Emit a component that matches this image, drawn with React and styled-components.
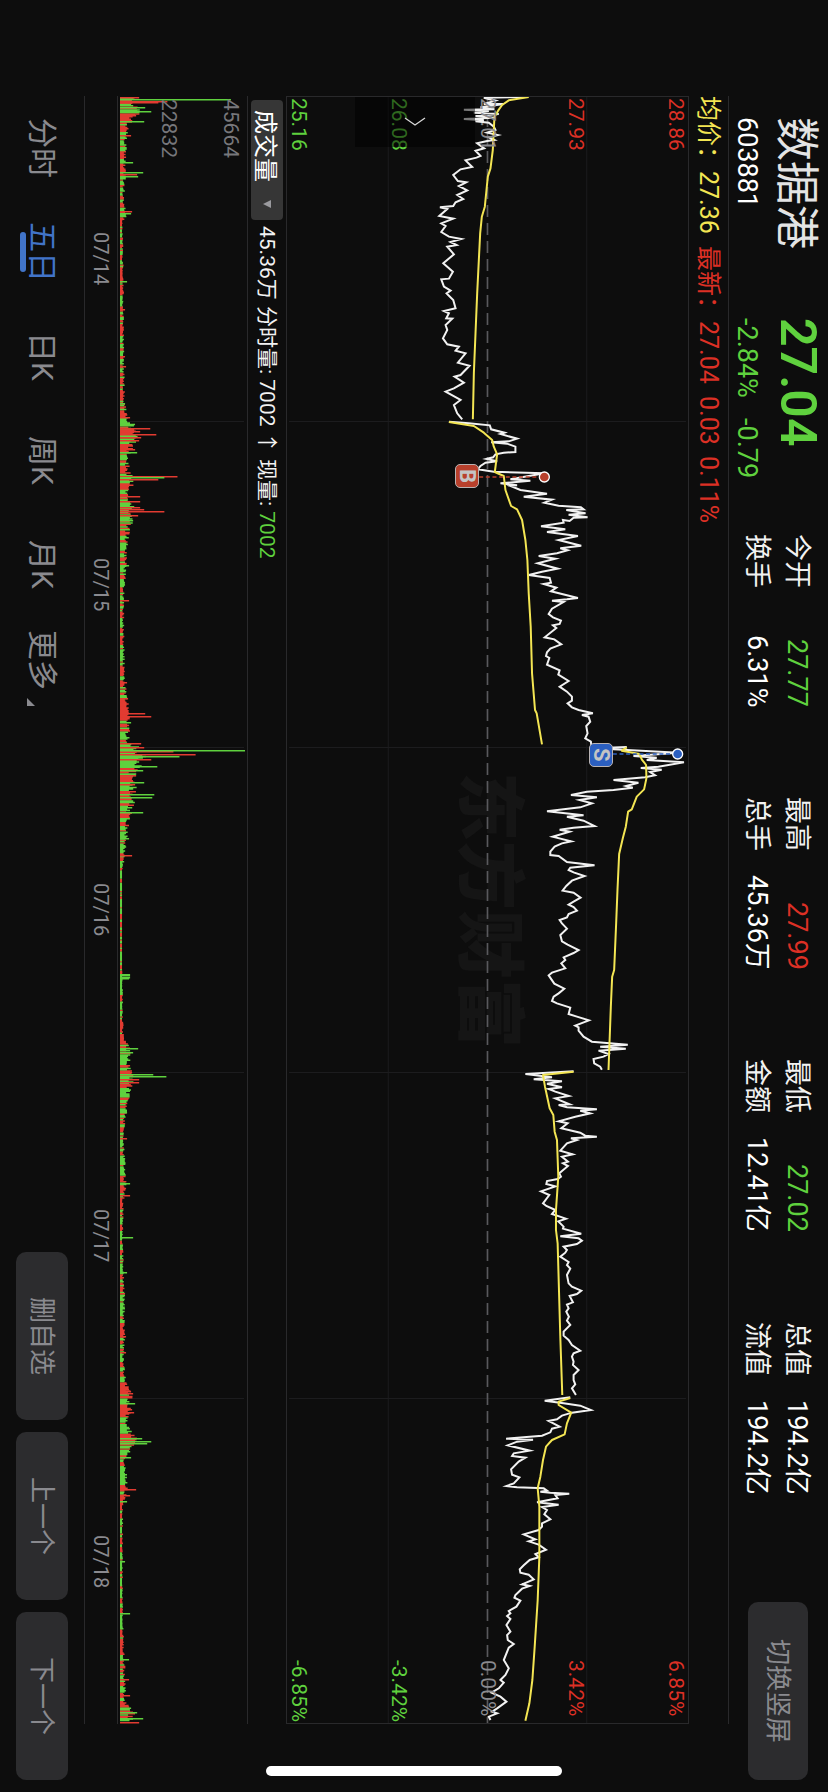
import React from "react";
import styled, { createGlobalStyle } from "styled-components";

const RED = "#dc3025";
const GREEN = "#5fd13e";
const YELLOW = "#f3e553";
const MUTED = "#8a8a8f";
const RULE = "#29292b";
const GRID = "#1c1c1e";

const GlobalStyle = createGlobalStyle`
  *, *::before, *::after { box-sizing: border-box; }
  body { margin: 0; background: #0d0d0d; }
  button, select { font: inherit; color: inherit; border: 0; margin: 0; padding: 0; }
`;

/* The phone is held sideways: every row runs from top to bottom of the window. */
const Screen = styled.div`
  writing-mode: vertical-rl;
  text-orientation: sideways;
  position: relative;
  display: flex;
  flex-direction: column;
  width: 100%;
  height: 100vh;
  min-height: 1500px;
  overflow: hidden;
  background: #0d0d0d;
  color: #f2f2f2;
  font-family: Roboto, "Noto Sans CJK SC", sans-serif;
  font-size: 21px;
  white-space: nowrap;
`;

const Header = styled.header`
  display: flex;
  flex: none;
  block-size: 99px;
  padding-inline: 117px 12px;
`;

const Quote = styled.div`
  flex: none;
  inline-size: ${(p) => p.$size}px;
  padding-block-start: 4px;
`;

const Name = styled.h1`
  margin: 0;
  margin-block-end: 4px;
  font-size: 44px;
  font-weight: 400;
  line-height: 56px;
  color: #e4e4e4;
`;

const Price = styled.div`
  margin-block-end: 8px;
  font-size: 50px;
  font-weight: 600;
  line-height: 52px;
  color: ${GREEN};
`;

const SubLine = styled.div`
  display: flex;
  gap: 20px;
  font-size: 27px;
  line-height: 34px;
  color: ${(p) => p.$color || "#ffffff"};
`;

const Stats = styled.div`
  display: flex;
  flex: 1;
  justify-content: space-between;
  padding-block-start: 11px;
`;

const StatGroup = styled.dl`
  margin: 0;
  inline-size: 173px;
`;

const Stat = styled.div`
  display: flex;
  justify-content: space-between;
  font-size: 27px;
  line-height: 40px;
`;

const StatLabel = styled.dt`
  margin: 0;
`;

const StatValue = styled.dd`
  margin: 0;
  color: ${(p) => p.$color || "#ffffff"};
`;

const ActionButton = styled.button`
  flex: none;
  writing-mode: vertical-rl;
  text-orientation: sideways;
  inline-size: ${(p) => p.$length}px;
  block-size: ${(p) => p.$depth}px;
  border-radius: 10px;
  background: #2c2c2e;
  color: ${MUTED};
  font-size: 26px;
  line-height: 30px;
  text-align: center;
`;

const SwitchSlot = styled.div`
  flex: none;
  margin-inline-start: 107px;
  padding-block-start: 20px;
`;

const Main = styled.main`
  display: flex;
  flex: 1;
  flex-direction: column;
  margin-inline: 96px 68px;
  border-block: 1px solid ${RULE};
`;

const InfoRow = styled.div`
  display: flex;
  flex: none;
  gap: 12px;
  font-size: 25px;
  line-height: 39px;
  color: ${(p) => p.$color || RED};
`;

const Average = styled.span`
  color: ${YELLOW};
`;

const PriceChart = styled.section`
  position: relative;
  flex: 404 1 0;
  border: 1px solid ${RULE};
`;

const Drawing = styled.svg`
  position: absolute;
  inset: 0;
  width: 100%;
  height: 100%;
  display: block;
`;

const Watermark = styled.div`
  position: absolute;
  inset: 0;
  display: flex;
  align-items: center;
  justify-content: center;
  font-size: 69px;
  font-weight: 900;
  line-height: 68px;
  color: #151515;
`;

const Scale = styled.div`
  position: absolute;
  inset-block: 0;
  ${(p) => (p.$end ? "inset-inline-end: 1px;" : "inset-inline-start: 1px;")}
  display: flex;
  flex-direction: column;
  font-size: 21px;
  line-height: 24px;
`;

const ScaleCell = styled.div`
  display: flex;
  flex-direction: column;
  flex: ${(p) => (p.$place === "center" ? "0 0 0px" : "1 1 0")};
  block-size: 0;
  justify-content: ${(p) => p.$place};
  color: ${(p) => p.$color};
`;

const Expand = styled.button`
  position: absolute;
  inset-inline-start: 0;
  inset-block-end: 17%;
  inline-size: 50px;
  block-size: 120px;
  display: flex;
  align-items: center;
  justify-content: center;
  background: rgba(0, 0, 0, 0.5);
`;

const Badge = styled.span`
  position: absolute;
  left: ${(p) => p.$left}%;
  top: ${(p) => p.$top}%;
  width: 24px;
  height: 24px;
  border: 1px solid #b9b3b3;
  border-radius: 5px;
  background: ${(p) => p.$color};
  color: #c4c4c4;
  font-size: 22px;
  font-weight: 700;
  line-height: 22px;
  text-align: center;
`;

const VolumeBar = styled.div`
  display: flex;
  flex: none;
  align-items: center;
  block-size: 38px;
  padding-inline-start: 4px;
  gap: 6px;
  line-height: 32px;
`;

const Picker = styled.label`
  position: relative;
  flex: none;
  display: flex;
  align-items: center;
  inline-size: 120px;
  block-size: 32px;
  border-radius: 4px;
  background: #363636;
`;

const PickerSelect = styled.select`
  writing-mode: vertical-rl;
  text-orientation: sideways;
  appearance: none;
  inline-size: 120px;
  block-size: 32px;
  padding-block-start: 4px;
  padding-inline-start: 10px;
  background: transparent;
  color: #ffffff;
  font-size: 24px;
  line-height: 28px;
`;

const PickerArrow = styled.svg`
  position: absolute;
  inset-inline-end: 12px;
  inset-block-start: 12px;
  width: 8px;
  height: 8px;
  pointer-events: none;
`;

const Fall = styled.span`
  color: ${GREEN};
`;

const VolumeChart = styled.section`
  position: relative;
  flex: 130 1 0;
  border-block: 1px solid ${RULE};
`;

const VolumeScale = styled.div`
  position: absolute;
  inset-block: 0;
  inset-inline-start: 3px;
  display: flex;
  flex-direction: column;
  padding-block-start: 4px;
  color: #77777b;
  font-size: 21px;
  line-height: 24px;
`;

const VolumeMark = styled.div`
  flex: 0 0 50%;
`;

const Dates = styled.div`
  display: grid;
  flex: none;
  grid-template-columns: repeat(5, 1fr);
  text-align: center;
  font-size: 20px;
  line-height: 32px;
  color: ${MUTED};
`;

const Footer = styled.footer`
  display: flex;
  flex: none;
  align-items: center;
  justify-content: space-between;
  block-size: 84px;
  padding-inline: 96px 12px;
`;

const Tabs = styled.nav`
  display: flex;
`;

const Tab = styled.a`
  position: relative;
  display: flex;
  justify-content: center;
  inline-size: 104px;
  font-size: 30px;
  line-height: 44px;
  text-decoration: none;
  color: ${(p) => (p.$active ? "#4174c8" : MUTED)};

  &::after {
    content: "";
    display: ${(p) => (p.$active ? "block" : "none")};
    position: absolute;
    inset-block-end: 0;
    inset-inline-start: 32px;
    inline-size: 40px;
    block-size: 6px;
    border-radius: 3px;
    background: #4174c8;
  }
`;

const MoreMark = styled.svg`
  width: 8px;
  height: 8px;
  align-self: flex-end;
  margin-inline-start: 8px;
  margin-block-end: 7px;
`;

const Actions = styled.div`
  display: flex;
  gap: 12px;
`;

const HomeIndicator = styled.div`
  position: absolute;
  bottom: 16px;
  left: 50%;
  width: 296px;
  height: 10px;
  margin-left: -148px;
  border-radius: 5px;
  background: #ffffff;
`;

const STATS = [
  [["今开", "27.77", GREEN], ["换手", "6.31%"]],
  [["最高", "27.99", RED], ["总手", "45.36万"]],
  [["最低", "27.02", GREEN], ["金额", "12.41亿"]],
  [["总值", "194.2亿"], ["流值", "194.2亿"]],
];

/* One session each: origin of the session, traded price and average price. */
const SESSIONS = [
  {
    at: [-48, -51],
    price:
      "770,51 640,53 675,62 640,72 700,72 630,82 672,88 580,89 655,93 610,98 685,102 615,108 670,113 580,117 640,121 615,124 655,128 670,140 675,150 650,158 682,165 655,172 672,180 650,183 620,190 641,205 615,212 630,228 618,233 585,241 605,261 570,268 548,285 562,303 587,307 565,318 590,331 560,345 578,357 555,367 548,378 508,382 530,387 506,408 548,416 512,430 525,438 512,456 535,470 572,477 540,486 558,495 530,500 550,523 518,550 547,575 535,596 512,598 520,620 540,632 528,640 548,660 555,685 520,693 535,700 527,715 545,716 525,735 530,750 517,775 530,793 565,800 555,812 585,820 562,848 597,857 570,885 552,890 580,908 550,925 525,935 570,960 550,975 560,1000 575,1018",
    average:
      "775,51 715,61 695,75 683,92 672,110 670,150 667,210 660,265 652,290 648,330 643,380 634,410 629,460 625,540 620,640 615,760 610,880 607,1018",
  },
  {
    at: [342, 969],
    price:
      "145,5 205,10 268,16 272,28 312,38 300,42 350,56 325,64 272,67 320,71 345,80 345,96 310,98 285,103 278,112 258,117 290,124 255,128 240,138 232,148 280,155 432,160 330,178 390,182 300,190 350,196 330,198 360,210 440,221 370,230 455,239 432,248 475,257 542,262 550,268 498,270 556,280 505,284 562,292 520,293 508,303 488,300 490,308 422,319 495,328 440,336 533,348 475,360 543,377 480,385 502,391 470,400 415,408 465,416 412,430 472,446 425,455 385,465 448,474 452,488 430,492 468,503 452,514 533,534 500,538 455,542 490,546 455,566 445,582 458,592 482,602 478,612 458,616 468,624 433,652 462,658 483,673 450,686 440,697 437,708 447,714 440,734 478,751 474,764 505,783 478,800 500,815 515,830 515,842 502,850 515,862 535,870 578,880 545,885 565,890 570,905 558,918 562,940 555,955 572,965 573,975",
    average:
      "145,6 220,18 250,38 275,60 280,80 290,103 283,156 310,168 315,210 332,258 350,268 365,300 375,360 381,420 385,520 391,620 395,760 404,870 409,880 425,973",
  },
  {
    at: [342, 969],
    price:
      "680,981 600,984 640,988 835,998 700,1008 770,1013 740,1020 852,1027 775,1040 722,1044 785,1049 750,1056 765,1066 735,1072 640,1080 715,1088 678,1098 698,1103 640,1110 560,1115 512,1125 590,1132 538,1140 575,1150 540,1162 440,1174 550,1186 500,1190 550,1202 583,1218 520,1223 478,1229 508,1235 457,1250 513,1264 485,1270 463,1280 450,1295 450,1305 475,1308 500,1326 583,1336 510,1343 505,1350 520,1357 553,1368 515,1382 498,1398 487,1412 520,1418 541,1433 520,1445 505,1454 520,1461 530,1472 505,1482 500,1492 478,1500 485,1510 500,1526 480,1545 485,1564 502,1574 535,1590 520,1599 490,1612 495,1620 483,1630 495,1645 455,1658 445,1666 462,1691 492,1706 475,1720 460,1730 455,1743 470,1750 510,1763 505,1782 530,1790 566,1801 525,1817 535,1822 535,1832 550,1850 575,1865 683,1874 600,1880 677,1886 595,1892 625,1902 610,1910 580,1917 582,1930 600,1940 605,1949",
    average:
      "680,982 665,992 718,1002 725,1018 738,1035 739,1075 732,1108 710,1130 695,1168 684,1175 677,1220 668,1255 657,1302 652,1410 648,1510 642,1650 636,1670 632,1760 625,1950",
  },
  {
    at: [342, 2859],
    price:
      "520,64 375,72 455,82 400,88 485,94 440,101 485,112 445,117 465,125 506,138 465,145 508,163 475,165 500,172 590,178 540,182 570,190 525,200 475,214 502,220 483,235 540,248 555,257 590,260 512,265 530,270 500,280 480,302 517,313 485,320 503,335 488,340 503,348 477,370 482,380 472,387 440,393 438,402 465,409 422,424 447,435 428,460 438,468 465,480 455,492 497,506 474,514 490,530 488,536 543,551 480,559 535,565 545,572 530,582 490,590 500,600 495,608 480,620 505,636 500,645 510,656 500,675 505,700 515,710 543,722 530,732 508,738 518,757 500,764 505,775 498,785 506,800 500,812 510,825 490,845 490,857 505,870 515,885 540,902 520,910 515,920 520,935 518,945 535,960 520,975 520,990 525,1003 515,1015 527,1035",
    average:
      "520,65 428,75 434,110 448,175 459,195 463,245 470,270 474,380 467,480 467,540 472,580 476,720 480,860 486,1035",
  },
  {
    at: [342, 3849],
    price:
      "510,52 433,62 490,70 540,77 572,90 515,98 485,107 470,118 445,123 478,140 455,146 450,157 425,167 317,176 398,179 350,185 322,196 388,212 340,220 335,228 375,233 355,245 332,268 335,284 357,292 340,310 318,318 350,322 430,325 440,332 420,335 450,338 507,341 465,345 472,355 410,367 475,374 425,381 440,390 432,403 450,418 425,430 425,440 415,450 370,463 405,478 385,484 415,494 437,509 405,522 415,532 388,540 370,556 358,568 360,578 385,584 400,598 365,613 388,618 365,626 345,645 342,653 360,662 348,680 325,693 330,700 320,708 330,717 318,735 330,755 320,765 322,780 340,792 325,803 310,840 325,865 315,885 300,900 310,908 295,925 273,938 300,950 318,965 290,985 275,995 290,1000 265,1010 270,1020",
    average:
      "510,54 475,65 475,75 513,98 500,130 493,163 455,180 437,200 428,240 420,290 412,325 417,380 417,530 412,660 403,800 396,900 387,970 375,1022",
  },
];

const DAY_LINES = [973.5, 1951.5, 2926.5, 3904.5];

/* Usual depth of the volume bars along the five sessions: [position, depth]. */
const ENVELOPE = [
  [0, 18], [14, 22], [24, 14], [34, 8], [64, 6], [79, 6], [104, 4], [119, 8], [126, 3], [204, 4],
  [249, 4], [304, 5], [321, 9], [328, 16], [344, 18], [356, 11], [374, 9], [384, 18], [394, 10],
  [409, 15], [419, 16], [434, 10], [464, 7], [504, 4], [586, 5], [616, 12], [644, 10], [652, 24],
  [661, 30], [674, 17], [699, 17], [716, 12], [744, 7], [760, 6], [774, 2], [869, 2], [885, 3],
  [914, 3], [939, 4], [951, 12], [969, 10], [979, 18], [994, 11], [1014, 7], [1044, 4], [1087, 7],
  [1104, 4], [1144, 3], [1197, 5], [1244, 5], [1264, 4], [1284, 7], [1297, 13], [1309, 12],
  [1329, 9], [1342, 17], [1349, 15], [1361, 6], [1394, 8], [1409, 3], [1517, 3], [1544, 4],
  [1584, 6], [1604, 6], [1616, 15], [1628, 15],
];

const RED_SPIKES = [
  [1, 19], [5, 47], [6, 38], [19, 16], [39, 11], [78, 17], [115, 12], [213, 5], [260, 5], [270, 6],
  [321, 10], [332, 30], [335, 20], [338, 36], [341, 21], [344, 19], [353, 15], [380, 57], [383, 38],
  [400, 20], [405, 20], [411, 20], [413, 24], [415, 44], [419, 18], [504, 9], [586, 7], [602, 8],
  [617, 25], [620, 31], [647, 21], [651, 24], [655, 53], [658, 75], [663, 31], [679, 16], [688, 15],
  [759, 12], [969, 10], [976, 12], [983, 19], [986, 19], [1042, 7], [1099, 10], [1197, 5],
  [1240, 6], [1256, 6], [1293, 9], [1295, 11], [1297, 13], [1313, 12], [1316, 14], [1393, 16],
  [1399, 10], [1583, 9], [1599, 10], [1626, 19],
];

const GREEN_SPIKES = [
  [3, 110], [11, 25], [15, 31], [25, 24], [66, 13], [76, 23], [80, 18], [117, 11], [185, 7],
  [307, 5], [356, 17], [381, 44], [424, 13], [469, 9], [654, 124], [660, 59], [670, 37], [674, 23],
  [686, 24], [698, 34], [701, 32], [716, 23], [742, 9], [878, 10], [879, 10], [881, 10], [882, 9],
  [952, 18], [956, 13], [978, 33], [980, 46], [1016, 7], [1087, 10], [1141, 13], [1176, 7],
  [1307, 15], [1342, 22], [1345, 31], [1347, 27], [1361, 11], [1405, 7], [1465, 5], [1517, 10],
  [1563, 9], [1616, 17], [1622, 23],
];

function usualDepth(y) {
  let i = 1;
  while (i < ENVELOPE.length - 1 && ENVELOPE[i][0] < y) i += 1;
  const [y0, d0] = ENVELOPE[i - 1];
  const [y1, d1] = ENVELOPE[i];
  return d0 + ((d1 - d0) * (y - y0)) / (y1 - y0);
}

function bar(y, depth) {
  return `M2 ${y.toFixed(2)}h${depth.toFixed(1)}v1.5h${(-depth).toFixed(1)}z`;
}

function volumePaths() {
  let seed = 603881;
  const next = () => {
    seed = (seed * 1103515245 + 12345) % 2147483648;
    return seed / 2147483648;
  };
  const paths = { up: "", down: "" };
  let side = "down";
  for (let i = 0; i < 1203; i += 1) {
    const y = 1 + i * 1.35;
    if (next() < 0.3) side = side === "up" ? "down" : "up";
    const depth = Math.max(2, usualDepth(y) * (0.5 + 0.5 * next()));
    paths[side] += bar(y, depth);
  }
  return paths;
}

const VOLUME = volumePaths();

function spikes(list) {
  return list.map(([y, depth]) => bar(y, depth)).join("");
}

function PriceDrawing() {
  return (
    <Drawing viewBox="0 0 1206 4878" preserveAspectRatio="none" aria-hidden="true">
      <g stroke={GRID} strokeWidth="3">
        <path d="M304.500 0V4878M901.500 0V4878" />
        {DAY_LINES.map((y) => (
          <path key={y} d={`M6 ${y}H1200`} />
        ))}
      </g>
      <path d="M603 0V4878" stroke="#59595d" strokeWidth="5" strokeDasharray="36 18" />
      {SESSIONS.map((s, i) => (
        <g key={i} transform={`translate(${s.at[0]} ${s.at[1]})`} fill="none" strokeWidth="6">
          <polyline points={s.price} stroke="#f2f2f2" strokeMiterlimit="5" />
          <polyline points={s.average} stroke={YELLOW} strokeLinejoin="round" />
        </g>
      ))}
      <g strokeWidth="4" strokeDasharray="12 8">
        <path d="M578 1140H762" stroke="#b8402c" />
        <path d="M980 1971H1162" stroke="#2b5fc0" />
      </g>
      <g stroke="#ffffff" strokeWidth="4">
        <circle cx="774" cy="1140" r="15" fill="#b8402c" />
        <circle cx="1175" cy="1971" r="15" fill="#2b5fc0" />
      </g>
    </Drawing>
  );
}

function PriceScale({ values, end }) {
  const places = ["flex-start", "flex-start", "center", "flex-end", "flex-end"];
  const colors = [RED, RED, "#8a8a8f", GREEN, GREEN];
  return (
    <Scale $end={end}>
      {values.map((v, i) => (
        <ScaleCell key={v} $place={places[i]} $color={colors[i]}>
          <span>{v}</span>
        </ScaleCell>
      ))}
    </Scale>
  );
}

export default function App() {
  return (
    <Screen>
      <GlobalStyle />
      <Header>
        <Quote $size={201}>
          <Name>数据港</Name>
          <SubLine>603881</SubLine>
        </Quote>
        <Quote $size={216}>
          <Price>27.04</Price>
          <SubLine $color={GREEN}>
            <span>-2.84%</span>
            <span>-0.79</span>
          </SubLine>
        </Quote>
        <Stats>
          {STATS.map((group) => (
            <StatGroup key={group[0][0]}>
              {group.map(([label, value, color]) => (
                <Stat key={label}>
                  <StatLabel>{label}</StatLabel>
                  <StatValue $color={color}>{value}</StatValue>
                </Stat>
              ))}
            </StatGroup>
          ))}
        </Stats>
        <SwitchSlot>
          <ActionButton type="button" $length={178} $depth={60}>切换竖屏</ActionButton>
        </SwitchSlot>
      </Header>

      <Main>
        <InfoRow>
          <Average>均价：27.36</Average>
          <span>最新：27.04</span>
          <span>0.03</span>
          <span>0.11%</span>
        </InfoRow>

        <PriceChart>
          <Watermark>东方财富</Watermark>
          <PriceDrawing />
          <PriceScale values={["28.86", "27.93", "27.01", "26.08", "25.16"]} />
          <PriceScale end values={["6.85%", "3.42%", "0.00%", "-3.42%", "-6.85%"]} />
          <Badge $left={42} $top={22.6} $color="#b8402c">B</Badge>
          <Badge $left={75.3} $top={39.7} $color="#2b5fc0">S</Badge>
          <Expand type="button" aria-label="展开">
            <svg width="22" height="10" viewBox="0 0 22 10" fill="none" stroke="#d8d8d8" strokeWidth="1.3">
              <path d="M1 1l10 7 10-7" />
            </svg>
          </Expand>
        </PriceChart>

        <VolumeBar>
          <Picker>
            <PickerSelect aria-label="指标" defaultValue="成交量">
              <option>成交量</option>
            </PickerSelect>
            <PickerArrow viewBox="0 0 8 8">
              <path d="M0 4l8-4v8z" fill="#9a9a9e" />
            </PickerArrow>
          </Picker>
          <span>45.36万</span>
          <span>分时量: 7002</span>
          <span>↑</span>
          <span>
            现量: <Fall>7002</Fall>
          </span>
        </VolumeBar>

        <VolumeChart>
          <Drawing viewBox="0 0 128 1628" preserveAspectRatio="none" aria-hidden="true">
            <path d="M2 325.500H125M2 651.500H125M2 976.500H125M2 1302.500H125" stroke={GRID} />
            <path d={VOLUME.up} fill="#e23b31" />
            <path d={VOLUME.down} fill={GREEN} />
            <path d={spikes(RED_SPIKES)} fill="#e23b31" />
            <path d={spikes(GREEN_SPIKES)} fill={GREEN} />
          </Drawing>
          <VolumeScale>
            <VolumeMark>45664</VolumeMark>
            <VolumeMark>22832</VolumeMark>
          </VolumeScale>
        </VolumeChart>

        <Dates>
          <span>07/14</span>
          <span>07/15</span>
          <span>07/16</span>
          <span>07/17</span>
          <span>07/18</span>
        </Dates>
      </Main>

      <Footer>
        <Tabs>
          <Tab href="#minute">分时</Tab>
          <Tab href="#five" $active>五日</Tab>
          <Tab href="#day">日K</Tab>
          <Tab href="#week">周K</Tab>
          <Tab href="#month">月K</Tab>
          <Tab href="#more">
            更多
            <MoreMark viewBox="0 0 8 8">
              <path d="M0 0v8h8z" fill={MUTED} />
            </MoreMark>
          </Tab>
        </Tabs>
        <Actions>
          <ActionButton type="button" $length={168} $depth={52}>删自选</ActionButton>
          <ActionButton type="button" $length={168} $depth={52}>上一个</ActionButton>
          <ActionButton type="button" $length={168} $depth={52}>下一个</ActionButton>
        </Actions>
      </Footer>
      <HomeIndicator />
    </Screen>
  );
}
